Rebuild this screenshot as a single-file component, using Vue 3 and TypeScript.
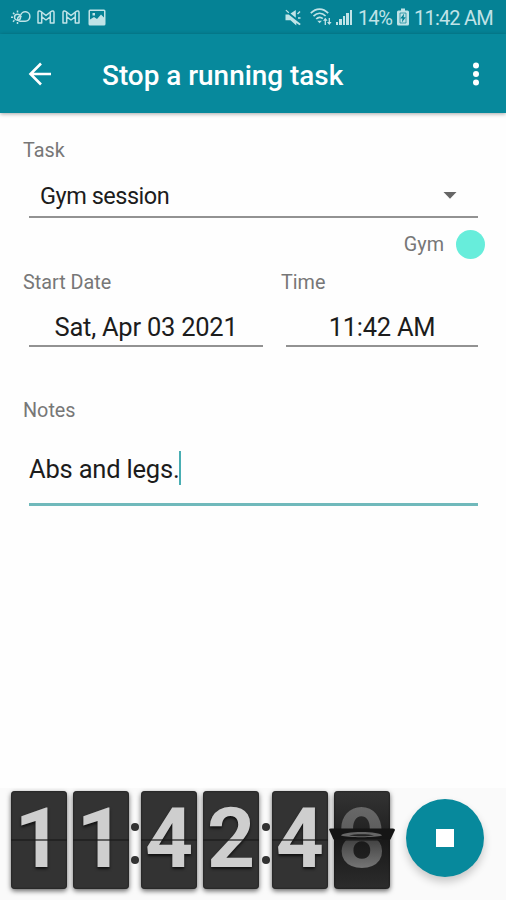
<script setup lang="ts">
import { ref } from 'vue'

interface TaskEntry {
  name: string
  category: string
  date: string
  time: string
  notes: string
}

const entry = ref<TaskEntry>({
  name: 'Gym session',
  category: 'Gym',
  date: 'Sat, Apr 03 2021',
  time: '11:42 AM',
  notes: 'Abs and legs.',
})

const clock: string[] = ['1', '1', ':', '4', '2', ':', '4']
const flipping = { upper: '9', lower: '8' }
const signalBars: number[] = [3, 6, 9, 12, 15]
</script>

<template>
  <div class="screen">
    <div class="status">
      <div class="notifications">
        <svg class="weather" width="20" height="18" viewBox="0 0 20 18" fill="none" stroke="currentColor" stroke-width="1.5">
          <circle cx="6.5" cy="9.200" r="3" />
          <path d="M6.500 2.500v2M6.500 14v2M0 9.200h2M2 4.700l1.400 1.400M2 13.700l1.400-1.400" />
          <path d="M9 13.200h5.200a4.700 4.700 0 1 0-4.600-5.800M9 13.200a2.400 2.400 0 1 1 1.500-4.300" />
        </svg>
        <svg v-for="n in 2" :key="n" class="mail" width="18" height="14" viewBox="0 0 18 14" fill="none" stroke="currentColor" stroke-width="1.5" stroke-linejoin="round">
          <path d="M1 13V2.500C1 1 2.600.5 3.700 1.400L9 5.500l5.300-4.100C15.400.5 17 1 17 2.500V13h-3.700V6.800L9 10 4.700 6.800V13z" />
          <path d="M4.700 2.500v4.300M13.300 2.500v4.300" />
        </svg>
        <svg class="picture" width="18" height="17" viewBox="0 0 18 17">
          <path fill="currentColor" fill-rule="evenodd" d="M2 .5h14A1.500 1.500 0 0 1 17.500 2v13a1.500 1.500 0 0 1-1.500 1.500H2A1.500 1.500 0 0 1 .5 15V2A1.500 1.500 0 0 1 2 .5zM2 2v8.500l4-2.500 3 2 4-4.500 3 3V2zM4.500 4h2.500v2.500H4.500z" />
        </svg>
      </div>
      <div class="system">
        <svg class="mute" width="17" height="17" viewBox="0 0 17 17">
          <path fill="currentColor" d="M.5 5.500h3.200L15.800 15l-1.300 1.300-3.200-2.300v2.500L5.500 11.300h-5z" />
          <path fill="currentColor" d="M5.500 4.600L10.800 1v7.800zM1.200.8l3 2.500-.8.900L.5 1.600z" />
          <path d="M12.500 5l2.500-2.500M13 9h2.500" stroke="currentColor" stroke-width="1.500" />
        </svg>
        <svg class="wifi" width="23" height="18" viewBox="0 0 23 18" fill="none" stroke="currentColor" stroke-width="1.700">
          <path d="M.8 5.200C6-.2 13-.2 18.200 5.200M3.500 8.200c3.800-3.900 8.400-3.900 12.100-.2M6.200 11c2.200-2.200 4.800-2.200 6.600-.4" />
          <path d="M7.300 12.700h4.600l-2.300 2.600z" fill="currentColor" stroke="none" />
          <path d="M15.300 17v-6M19.300 10v6" stroke-width="1.300" />
          <path d="M13 12.800l2.300-3 2.300 3zM17 14l2.300 3 2.300-3z" fill="currentColor" stroke="none" />
        </svg>
        <div class="signal">
          <i v-for="height in signalBars" :key="height" :style="{ height: height + 'px' }"></i>
        </div>
        <span class="percent">14%</span>
        <svg class="battery" width="12" height="18" viewBox="0 0 12 18">
          <path fill="currentColor" d="M4 .5h4v2h2.500A1.500 1.500 0 0 1 12 4v12a1.500 1.500 0 0 1-1.500 1.500h-9A1.500 1.500 0 0 1 0 16V4a1.500 1.500 0 0 1 1.500-1.500H4z" />
          <path d="M3 5h6v10H3z" fill="none" stroke="#058295" stroke-width=".7" />
          <path fill="#058295" d="M7.200 5.500L3.200 10.500h2.300L4.800 14.500l4-5.300H6.600z" />
        </svg>
        <span class="status-time">{{ entry.time }}</span>
      </div>
    </div>

    <header class="toolbar">
      <svg class="back" width="24" height="24" viewBox="0 0 24 24" fill="none" stroke="#fff" stroke-width="2.600">
        <path d="M23 12H2.500M13 1.500L2.500 12 13 22.500" />
      </svg>
      <h1>Stop a running task</h1>
      <svg class="more" width="8" height="24" viewBox="0 0 8 24" fill="#fff">
        <circle cx="4" cy="3.500" r="3" />
        <circle cx="4" cy="12" r="3" />
        <circle cx="4" cy="20.500" r="3" />
      </svg>
    </header>

    <main class="form">
      <label>Task</label>
      <div class="field select">
        <span>{{ entry.name }}</span>
        <svg width="14" height="7" viewBox="0 0 14 7"><path d="M.5 0h13L7 6.800z" fill="#666" /></svg>
      </div>
      <div class="category">
        <span>{{ entry.category }}</span>
        <i class="swatch"></i>
      </div>
      <div class="when">
        <div class="date">
          <label>Start Date</label>
          <div class="field centered">{{ entry.date }}</div>
        </div>
        <div class="time">
          <label>Time</label>
          <div class="field centered">{{ entry.time }}</div>
        </div>
      </div>
      <label class="notes-label">Notes</label>
      <div class="field notes"><span>{{ entry.notes }}</span><i class="caret"></i></div>
    </main>

    <footer class="timer">
      <div class="clock">
        <template v-for="(char, index) in clock" :key="index">
          <div v-if="char === ':'" class="colon"><i></i><i></i></div>
          <div v-else class="card"><span>{{ char }}</span></div>
        </template>
        <div class="card turning">
          <span class="upper">{{ flipping.upper }}</span>
          <span class="lower">{{ flipping.lower }}</span>
          <svg class="flap" width="66" height="14" viewBox="0 0 66 14">
            <path d="M0 1.500Q0 .5 2 .5h62q2 0 2 1.500l-4.500 9.500h-57z" fill="#151515" />
            <path d="M12 7.500C13 2.800 52 2.800 53 7.500 46 9.800 19 9.800 12 7.500z" fill="#666" />
            <path d="M20 7.600c5-1.800 20-1.800 25 0-6 .9-19 .9-25 0z" fill="#222" />
          </svg>
        </div>
      </div>
      <button class="stop" aria-label="Stop"><i></i></button>
    </footer>
  </div>
</template>

<style>
body {
  margin: 0;
  background: #fff;
}
</style>

<style scoped>
.screen {
  width: 506px;
  height: 900px;
  display: flex;
  flex-direction: column;
  overflow: hidden;
  background: #fefefe;
  color: #1c1c1c;
  font-family: Roboto, "Liberation Sans", sans-serif;
}

svg {
  display: block;
  flex: none;
}

.status {
  height: 34px;
  box-sizing: border-box;
  padding: 0 13px 0 11px;
  display: flex;
  align-items: center;
  justify-content: space-between;
  background: #058295;
  color: #c0e3e7;
}

.notifications,
.system {
  display: flex;
  align-items: center;
}

.mail {
  margin-left: 7px;
}

.weather + .mail {
  margin-left: 6px;
}

.picture {
  margin-left: 8px;
}

.wifi {
  margin-left: 8px;
}

.signal {
  display: flex;
  align-items: flex-end;
  gap: 1px;
  height: 16px;
  margin-left: 3px;
}

.signal i {
  width: 2.5px;
  background: currentColor;
}

.percent,
.status-time {
  font-size: 20px;
  line-height: 34px;
  white-space: nowrap;
  padding-top: 1px;
}

.percent {
  margin-left: 6px;
  width: 33px;
  letter-spacing: -1.1px;
}

.battery {
  margin-left: 6px;
}

.status-time {
  width: 79px;
  margin-left: 5px;
  letter-spacing: -0.8px;
}

.toolbar {
  height: 79px;
  flex: none;
  box-sizing: border-box;
  padding: 0 26px 0 28px;
  display: flex;
  align-items: center;
  background: #07899c;
  box-shadow: 0 1px 4px rgba(0, 0, 0, 0.35);
}

h1 {
  flex: 1;
  margin: 4px 0 0 50px;
  color: #fff;
  font-size: 27.9px;
  font-weight: 500;
  line-height: 34px;
}

.form {
  flex: 1;
  padding: 26px 28px 0 23px;
}

label {
  display: block;
  color: #777;
  font-size: 19.8px;
  line-height: 24px;
}

.field {
  box-sizing: border-box;
  margin-left: 6px;
  border-bottom: 2px solid #929292;
  white-space: nowrap;
}

.select {
  height: 55px;
  padding: 12px 21px 0 11px;
  display: flex;
  justify-content: space-between;
  align-items: center;
  font-size: 23.5px;
}

.select span {
  letter-spacing: -0.48px;
}

.category {
  height: 53px;
  margin-right: -7px;
  display: flex;
  align-items: center;
  justify-content: flex-end;
  gap: 12px;
  color: #777;
  font-size: 19.8px;
}

.swatch {
  width: 29px;
  height: 29px;
  border-radius: 50%;
  background: #67eddb;
}

.when {
  display: flex;
  gap: 18px;
}

.date {
  width: 240px;
}

.time {
  flex: 1;
}

.time .field {
  margin-left: 5px;
}

.centered {
  height: 52px;
  padding-top: 17px;
  line-height: 30px;
  font-size: 25.5px;
  letter-spacing: -0.25px;
  text-align: center;
}

.notes-label {
  margin-top: 52px;
}

.notes {
  height: 83px;
  padding-top: 28px;
  display: flex;
  align-items: flex-start;
  font-size: 25.5px;
  letter-spacing: -0.2px;
  line-height: 36px;
  border-bottom: 3px solid #70b9bb;
}

.caret {
  width: 2px;
  height: 34px;
  background: #49aeb3;
}

.timer {
  height: 112px;
  flex: none;
  display: flex;
  box-sizing: border-box;
  padding: 3px 22px 0 10.5px;
  justify-content: space-between;
  background: #fafafa;
}

.clock {
  display: flex;
}

.card {
  position: relative;
  width: 56px;
  height: 98px;
  border-radius: 4px;
  background: #333;
  box-shadow: 0 2px 5px rgba(0, 0, 0, 0.6), inset 0 0 2px #111;
  text-align: center;
}

.card + .card {
  margin-left: 6px;
}

.card span {
  display: block;
  color: #cecece;
  font-size: 84px;
  font-weight: 700;
  line-height: 98px;
  margin: -1px -4px 0;
  text-shadow: 0 2px 3px rgba(0, 0, 0, 0.7);
}

.card::after {
  content: "";
  position: absolute;
  inset: 48px 0 auto;
  height: 1.500px;
  background: rgba(25, 25, 25, 0.6);
}

.turning {
  display: grid;
  background: linear-gradient(#333, #202020 48%, #191919 50%, #2c2c2c);
}

.turning span {
  grid-area: 1 / 1;
  color: transparent;
  text-shadow: none;
  background: linear-gradient(#696969 15%, #5b5b5b 48%, #454545 52%, #747474 78%);
  background-clip: text;
}

.turning .upper {
  clip-path: inset(0 0 50% 0);
}

.turning .lower {
  clip-path: inset(50% 0 0 0);
}

.flap {
  position: absolute;
  left: -5px;
  top: 37px;
  z-index: 1;
}

.colon {
  width: 12.700px;
  display: flex;
  flex-direction: column;
  align-items: center;
  gap: 25px;
  padding-top: 32px;
}

.colon i {
  width: 8px;
  height: 8px;
  flex: none;
  border-radius: 50%;
  background: #333;
}

.stop {
  width: 78px;
  height: 78px;
  margin: 8px 0 0;
  padding: 0;
  display: grid;
  place-items: center;
  border: 0;
  border-radius: 50%;
  background: #07899c;
  box-shadow: 0 5px 8px rgba(0, 0, 0, 0.2);
}

.stop i {
  width: 18px;
  height: 18px;
  background: #fff;
}
</style>
